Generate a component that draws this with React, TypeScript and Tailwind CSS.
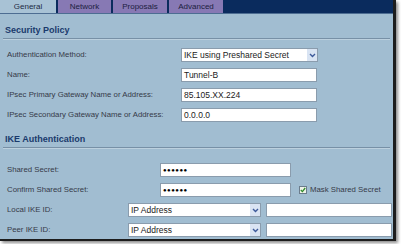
import React from 'react';

const Chevron: React.FC = () => (
    <span className="flex h-full w-[10px] items-center justify-center bg-[#d9e4f3]">
        <svg width="7" height="5" viewBox="0 0 7 5">
            <path d="M1 1 L3.5 3.5 L6 1" fill="none" stroke="#3d5a9a" strokeWidth="1.4" />
        </svg>
    </span>
);

const TextBox: React.FC<{ value?: string; width: string }> = ({ value = '', width }) => (
    <div className={`${width} h-[14px] bg-white border border-[#8a9cad] pl-[2px] text-[8.5px] leading-[12px] text-[#222] whitespace-nowrap overflow-hidden`}>
        {value}
    </div>
);

const Secret: React.FC = () => (
    <div className="w-[131px] h-[14px] bg-white border border-[#8a9cad] pl-[2px] flex items-center">
        <span className="text-[6px] leading-[12px] tracking-[0.5px] text-black">●●●●●●</span>
    </div>
);

const Select: React.FC<{ value: string; width: string }> = ({ value, width }) => (
    <div className={`${width} h-[14px] bg-white border border-[#8a9cad] flex items-stretch`}>
        <span className="flex-1 pl-[2px] text-[8.5px] leading-[12px] text-[#222] whitespace-nowrap overflow-hidden">{value}</span>
        <Chevron />
    </div>
);

const Row: React.FC<{ label: string; labelWidth: string; children: React.ReactNode }> = ({ label, labelWidth, children }) => (
    <div className="flex h-[20px] items-start">
        <div className={`${labelWidth} pl-[7px] text-[7.8px] leading-[14px] text-[#363a48] whitespace-nowrap`}>{label}</div>
        {children}
    </div>
);

const Heading: React.FC<{ title: string; className: string }> = ({ title, className }) => (
    <div className={className}>
        <div className="px-[5px] text-[9px] leading-[11px] font-bold text-[#1a3a6c]">{title}</div>
        <div className="mx-[3px] mt-[2px] h-[2px] border-t border-b border-t-[#7790a6] border-b-[#bcd0de]" />
    </div>
);

const App: React.FC = () => {
    return (
        <div className="w-[401px] h-[244px] bg-white overflow-hidden font-['Liberation_Sans',Arial,sans-serif]">
            <div className="w-[396px] h-[241px] flex flex-col bg-[#a1bdd1] border-r-[3px] border-b-[2px] border-[#1d1d1d] shadow-[2px_2px_3px_rgba(0,0,0,0.45)]">
                <div className="h-[14px] bg-[#0a2b5d] border-b border-[#4d6d92] flex items-start gap-[2px]">
                    <div className="w-[56px] h-[13px] bg-[#a8c2d5] text-center text-[8px] leading-[13px] text-[#1c2a44]">General</div>
                    <div className="w-[53px] h-[13px] bg-[#8779b4] text-center text-[8px] leading-[13px] text-[#1c2040]">Network</div>
                    <div className="w-[54px] h-[13px] bg-[#8779b4] text-center text-[8px] leading-[13px] text-[#1c2040]">Proposals</div>
                    <div className="w-[54px] h-[13px] bg-[#8779b4] text-center text-[8px] leading-[13px] text-[#1c2040]">Advanced</div>
                </div>

                <Heading title="Security Policy" className="pt-[11px]" />
                <div className="mt-[8px]">
                    <Row label="Authentication Method:" labelWidth="w-[181px]">
                        <Select value="IKE using Preshared Secret" width="w-[137px]" />
                    </Row>
                    <Row label="Name:" labelWidth="w-[181px]">
                        <TextBox value="Tunnel-B" width="w-[136px]" />
                    </Row>
                    <Row label="IPsec Primary Gateway Name or Address:" labelWidth="w-[181px]">
                        <TextBox value="85.105.XX.224" width="w-[136px]" />
                    </Row>
                    <Row label="IPsec Secondary Gateway Name or Address:" labelWidth="w-[181px]">
                        <TextBox value="0.0.0.0" width="w-[136px]" />
                    </Row>
                </div>

                <Heading title="IKE Authentication" className="pt-[6px]" />
                <div className="mt-[14px]">
                    <Row label="Shared Secret:" labelWidth="w-[160px]">
                        <Secret />
                    </Row>
                    <Row label="Confirm Shared Secret:" labelWidth="w-[160px]">
                        <Secret />
                        <div className="ml-[8px] mt-[3px] w-[8px] h-[8px] border border-[#6b7c8c] bg-[#eef3e8] flex items-center justify-center">
                            <svg width="6" height="6" viewBox="0 0 6 6">
                                <path d="M0.8 3 L2.4 4.6 L5.2 1" fill="none" stroke="#2f8a2a" strokeWidth="1.3" />
                            </svg>
                        </div>
                        <span className="ml-[3px] text-[7.8px] leading-[14px] text-[#363a48] whitespace-nowrap">Mask Shared Secret</span>
                    </Row>
                    <Row label="Local IKE ID:" labelWidth="w-[128px]">
                        <Select value="IP Address" width="w-[133px]" />
                        <div className="ml-[5px]"><TextBox width="w-[126px]" /></div>
                    </Row>
                    <Row label="Peer IKE ID:" labelWidth="w-[128px]">
                        <Select value="IP Address" width="w-[133px]" />
                        <div className="ml-[5px]"><TextBox width="w-[126px]" /></div>
                    </Row>
                </div>
            </div>
        </div>
    );
};

export default App;
